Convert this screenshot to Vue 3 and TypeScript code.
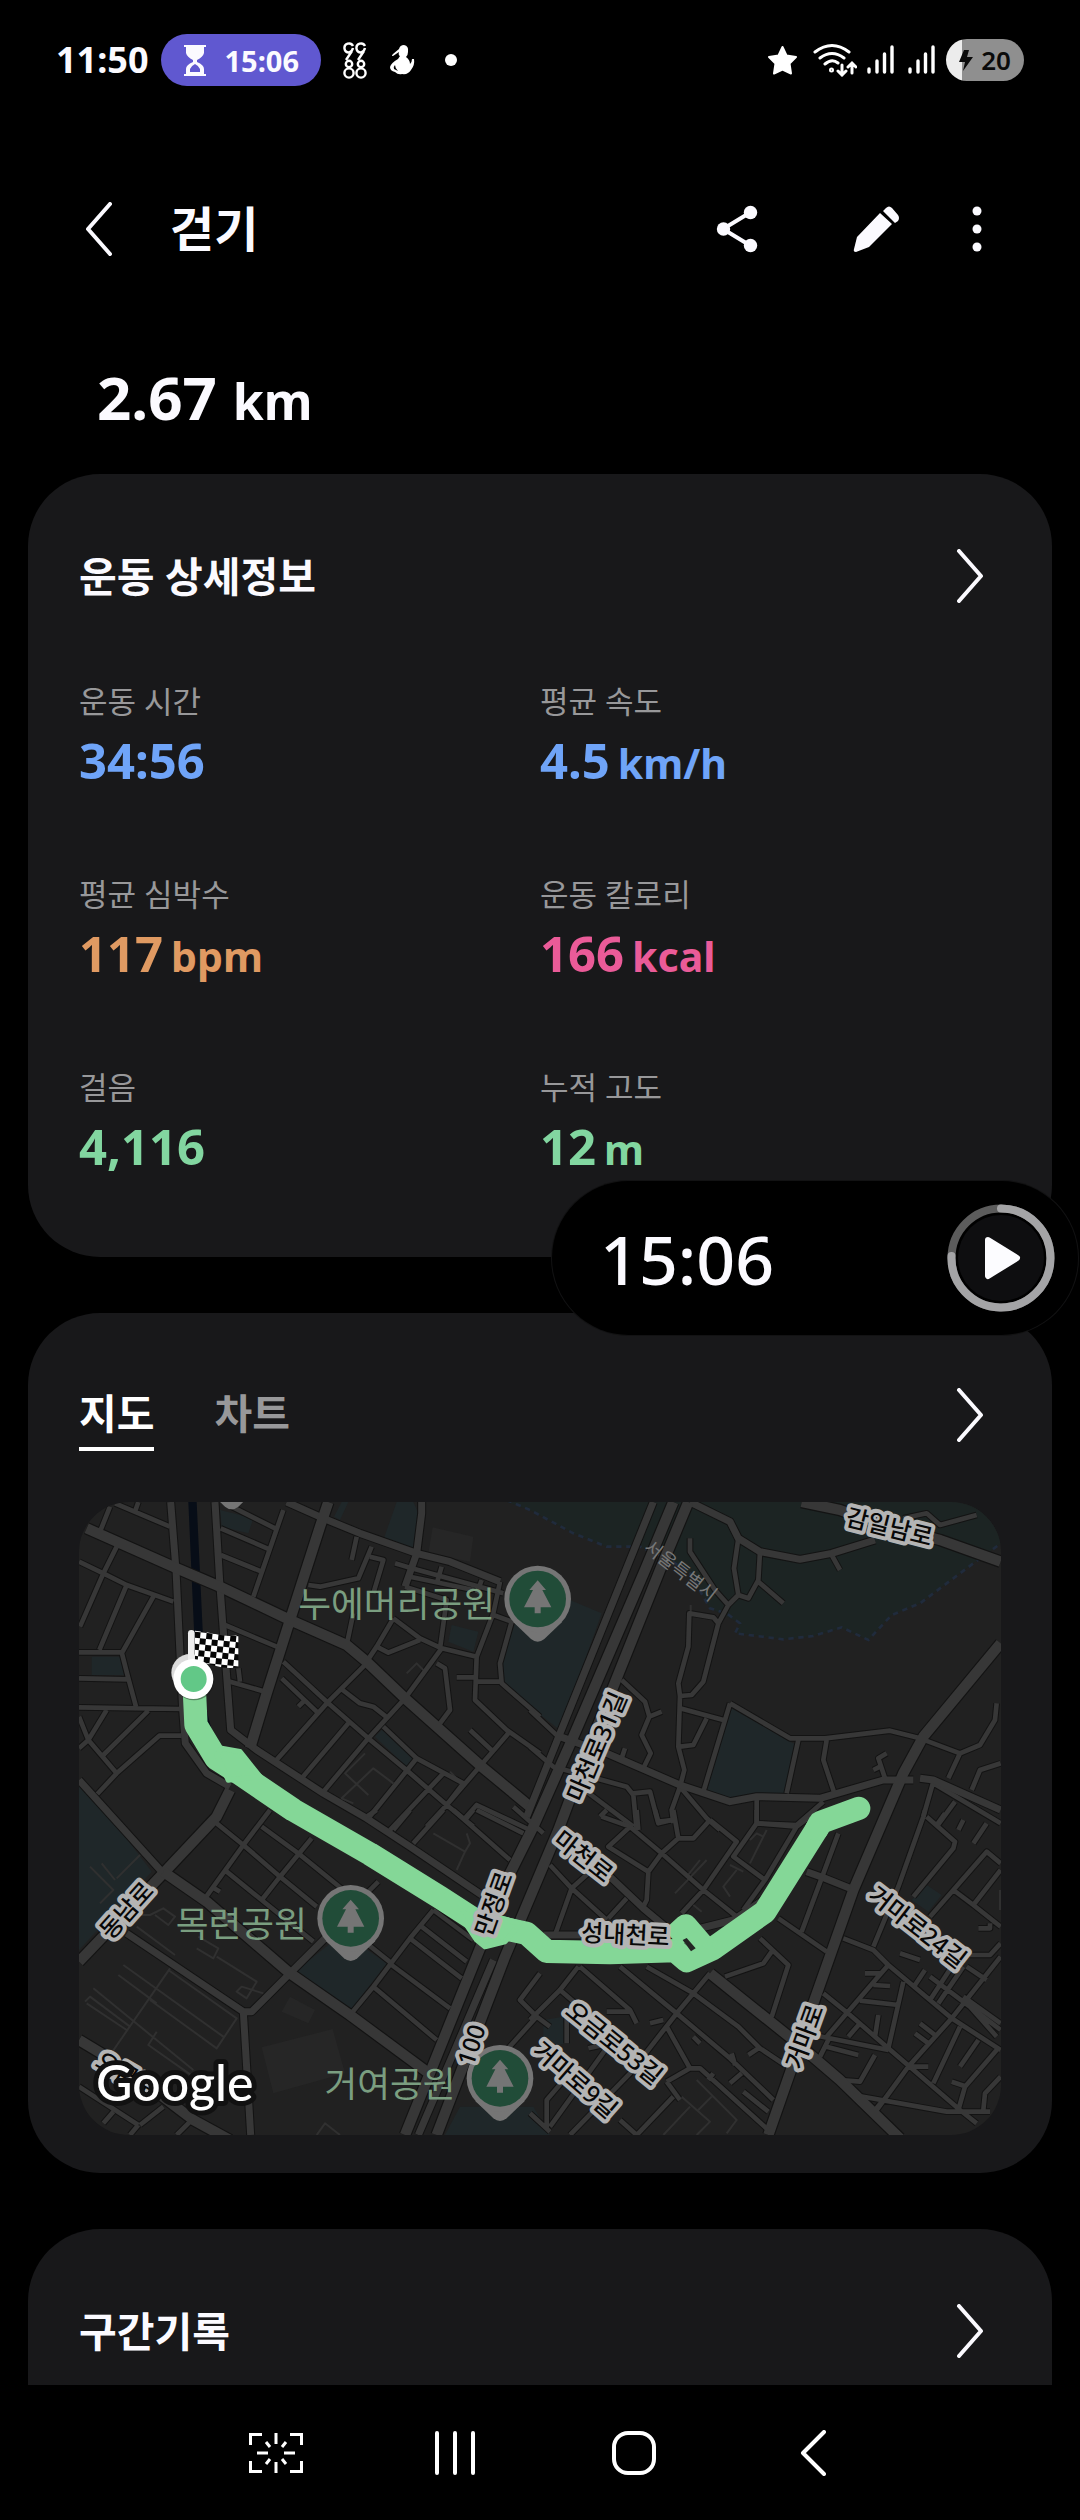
<script setup lang="ts">
import { ref } from 'vue'

interface Stat {
  label: string
  value: string
  unit?: string
  tone: 'blue' | 'orange' | 'pink' | 'green'
}

const stats: Stat[] = [
  { label: '운동 시간', value: '34:56', tone: 'blue' },
  { label: '평균 속도', value: '4.5', unit: 'km/h', tone: 'blue' },
  { label: '평균 심박수', value: '117', unit: 'bpm', tone: 'orange' },
  { label: '운동 칼로리', value: '166', unit: 'kcal', tone: 'pink' },
  { label: '걸음', value: '4,116', tone: 'green' },
  { label: '누적 고도', value: '12', unit: 'm', tone: 'green' },
]

const tabs = ['지도', '차트']
const activeTab = ref('지도')

/* The street map is made of four tiles; each road is given in its tile's own units. */
interface Tile {
  x: number
  y: number
  major: string
  medium: string
  minor: string
  thin: string
}

const tiles: Tile[] = [
  {
    x: 0,
    y: 0,
    major:
      'M805 36L780 110L690 390L620 610L570 775M80 115L350 235L480 290L690 390L860 465L920 515L1035 625L1265 830L1410 950M510 900L470 980L310 1150L57 1415',
    medium:
      'M332 36L348 240L368 660L376 760L440 850L510 890M465 36L480 290L512 720L590 780L790 910L920 985L1050 1070L1265 1215M680 36L790 85L900 130L1070 190L1170 215L1320 275M1085 36L1085 70L1070 190L1035 290M57 870L310 1150',
    minor:
      'M150 50L120 125M165 40L330 110M235 36L225 65M170 170L130 250L60 410M57 215L130 250L200 285L340 335M200 285L118 480M280 320L185 490M57 487L185 487L205 565L228 650M57 565L205 568M57 652L365 657M57 680L85 750L170 850M140 660L85 750L57 775M265 662L130 795M365 737L298 737L170 850L112 912M670 60L580 320M515 50L645 115M482 115L628 178M482 195L605 245M495 405L650 470M535 535L540 575M500 572L615 605M670 515L805 640M665 565L770 665M735 630L715 650M925 515L805 635L645 815M848 600L900 640L940 650L978 680M865 700L725 865M1035 625L925 745L790 905M805 640L925 745L1045 845L1160 945L1240 1010M1000 385L1080 445L1145 475L1250 500M1000 385L950 470L920 515M950 470L985 488L1080 450M860 465L880 370M745 285L780 290L895 265L935 170M890 140L875 210M930 200L970 210L940 310M1005 220L1055 235L1330 310M1035 290L1160 330L1140 475M1320 275L1300 370L1250 500L1245 630L1340 720L1440 790M1050 260L1240 300M1300 375L1355 395L1320 520L1325 580L1440 680M1245 575L1325 575M1190 562L1245 562M1130 520L1155 535L1170 660L1140 700M1145 475L1035 625M970 710L1070 805L1210 880M1070 805L925 985M1150 850L990 1020M1210 880L1160 945M1230 720L1300 785M1345 730L1160 945L1100 1010M1210 990L1250 945L1410 1020M1145 230L1130 280M1265 270L1250 310',
    thin: 'M915 790L855 850L925 915M1000 880L940 835L845 925L880 940M1040 550L1070 520L1090 540M1065 235L1105 245M1170 845L1205 880',
  },
  {
    x: 1410,
    y: 0,
    major:
      'M815 36L930 60L1040 100L1230 150L1412 215M1412 460L1180 740L1120 850L1060 990L970 1200L850 1540L790 1720L715 1935M430 36L345 240L130 740L10 1010L-60 1150L-160 1400L-375 1935M475 36L390 240L190 740L85 1020L-75 1400L-280 1935',
    medium:
      'M370 36L90 730L-10 980M90 740L230 790L450 885L600 935L680 920L870 925L1060 870L1150 870M1170 865L1210 870L1412 960M480 36L600 95L625 145L690 185L810 208L905 190L1035 150',
    minor:
      'M1120 85L1190 70L1230 105L1340 75M905 195L930 240M690 185L685 270L655 325L625 315L612 235L625 145M685 275L760 340M625 315L595 345L555 300L480 185L480 145M595 345L565 400L520 575L485 615L450 618L445 580L475 470L478 370L550 382L565 400M450 618L445 770L463 840L450 890L425 960L430 1000M450 655L580 690M530 685L490 765L450 770M600 640L780 745L885 745L1080 722L1170 745L1290 790L1350 765L1395 690L1400 640M600 640L520 905M805 750L770 910M890 750L880 810L915 915M1290 790L1255 865M1030 840L1050 830M1070 790L1045 805L1065 865M1412 820L1350 840L1325 900M1210 880L1412 1000M1210 875L1180 980M1275 935L1220 1010M275 570L345 635L358 680L335 735L362 790L340 835M358 680L395 665M285 775L275 805M0 660L90 745M0 770L70 830L290 890L310 915L320 1020M310 910L360 905L385 1000L425 990M150 890L310 1010M230 960L210 980M680 925L680 1000L800 1005L880 935M450 890L530 985L570 1020M-50 950L40 1030',
    thin: 'M482 345L482 370',
  },
  {
    x: 0,
    y: 960,
    major: 'M57 690L190 770L400 930L510 990M310 185L440 275L690 490L870 615L1100 785',
    medium: 'M200 370L550 605L575 605L690 490L810 370M550 605L572 975M1300 450L1075 975',
    minor:
      'M57 830L235 945M400 925L350 975M240 945L310 890M160 905L130 940M235 945L210 975M470 40L550 105L660 200L770 290M630 0L550 105L435 265M755 85L660 200L605 270M605 50L715 130L850 240M500 185L605 270L760 395M955 215L920 250M920 400L995 460M1120 300L1050 385L940 530L870 615M1120 300L1240 390M1085 350L1220 455M1050 385L1205 505M995 465L1170 595M940 530L1130 690M455 230L480 245M1150 0L1060 100M1000 60L1050 0M1180 0L1350 150M1250 0L1390 70M1215 30L1240 0M920 20L950 0M1440 490L1380 570L1430 620L1340 720M1430 620L1470 650',
    thin: 'M240 135L170 205M125 160L165 210M90 170L160 240L120 280M230 315L270 315L310 295L345 320L325 345L285 315M230 350L345 435M190 465L490 680M325 480L530 625L470 715L270 570M330 475L140 750M75 575L90 560L210 650M80 580L200 660M175 495L290 580M100 535L400 780M290 665L265 705L400 800M415 380L475 415L460 445L410 415M470 440L590 515L560 565L530 545L545 530L610 550M1120 70L1215 125L1190 180M1220 70L1230 100L1215 125M770 975L795 940L840 975',
  },
  {
    x: 1410,
    y: 960,
    major: 'M540 490L790 690L930 810L1110 985',
    medium: 'M40 375L430 375L610 330L700 270M240 200L340 295L430 370M830 185L885 205L960 235',
    minor:
      'M60 165L125 235L230 330M215 20L300 50L395 130L520 240L620 320M300 50L235 110L355 185L350 270L340 290M395 130L355 185M125 235L75 375M125 235L175 190M290 265L235 325M375 0L385 35L430 30M320 0L325 60M430 0L445 85L490 85L540 30M445 85L395 130M540 30L620 95L520 240L455 310M680 0L680 40L800 50L840 20M680 40L610 140L705 210M800 50L705 210L640 300M925 70L815 365M745 325L890 425M690 385L775 465L725 620M585 500L700 460L725 425M1185 0L1180 20L1105 230L1030 410M1190 20L1275 95L1270 115L1150 260M940 385L1030 420L1075 465L1265 625L1412 720M1245 10L1220 45M1300 30L1285 60M1370 40L1330 100M1412 160L1370 125L1270 240L1200 320M1270 240L1330 285L1412 180M1330 285L1412 350M1075 465L1010 540L890 680M1005 490L1050 490M1030 525L1080 528M990 572L1105 585M1120 515L1075 715M1110 430L1170 450M1185 480L1155 525M1320 435L1380 435L1412 400M1345 355L1380 355L1380 340M1300 470L1225 580M1265 470L1200 570M1412 440L1265 625L1135 770L1040 900M1300 560L1412 640M1320 590L1400 680M1370 510L1310 470M880 550L960 615L1075 715L1290 900L1340 940M850 675L1075 720M900 680L870 740M890 710L985 735M990 640L955 680M1045 615L1035 680M930 810L990 815L1035 735M970 855L1250 905L1380 905M1060 870L1035 900M1135 770L1195 770M1290 650L1210 820M1345 690L1290 770M1400 720L1305 830L1285 900M1265 815L1310 830M1412 800L1365 850L1360 900M1170 640L1215 675M1155 670L1195 700M145 470L90 540L0 630M90 540L160 600M150 470L300 600L320 640M230 605L300 605M270 470L440 610L600 745L730 870M350 470L490 550L625 650L690 715L765 765M540 490L440 610L300 790L120 975M410 650L480 775L410 815M480 775L510 775L715 960M360 640L400 630M490 680L510 700M655 735L685 715M605 730L615 765M635 790L600 820M550 790L535 810M640 845L715 905M430 860L320 975M410 815L450 870M0 910L60 965M50 960L50 870L110 800M270 930L320 975M110 600L110 700M175 715L220 705M60 950L240 700M1200 500L1412 660',
    thin: 'M500 810L620 930L590 970M545 860L505 900M400 975L480 890M455 860L540 935L500 975M710 60L660 160M660 90L680 70L700 80M640 185L600 165M620 180L580 230L600 260M530 150L435 250M510 150L470 200M490 285L515 305M1410 240L1410 300',
  },
]

const parks: string[] = [
  'M845 36L865 36L840 90L822 80Z',
  'M1010 36L1060 36L1075 70L1060 180L970 150Z',
  'M480 60L580 85L565 130L485 110Z',
  'M95 500L180 500L192 555L95 555Z',
  'M57 870L165 1000L275 1145L57 1380Z',
  'M1175 405L1255 425L1240 485L1165 455Z',
  'M970 715L1070 800L1040 830L945 740Z',
  'M1410 280L1625 370L1500 720L1330 590L1325 520L1365 400Z',
  'M2015 655L2190 755L2210 765L2175 910L2010 925L1940 900Z',
  'M850 1330L980 1420L870 1565L710 1440Z',
  'M1200 1850L1420 1850L1470 1935L1155 1935Z',
  'M1450 1590L1510 1580L1515 1660L1450 1680Z',
  'M2600 1185L2645 1215L2605 1265L2555 1230Z',
]

const blocks: string[] = [
  'M1118 112L1240 140L1230 215L1105 190Z',
  'M605 1672L818 1617L855 1750L640 1810Z',
  'M690 1520L765 1560L745 1600L665 1565Z',
]

const pins = [
  { x: 515, y: -70 },
  { x: 1433, y: 327 },
  { x: 872, y: 1285 },
  { x: 1320, y: 1765 },
]

const parkLabels = [
  { text: '누에머리공원', x: 1010, y: 380 },
  { text: '목련공원', x: 544, y: 1340 },
  { text: '거여공원', x: 990, y: 1820 },
]

const roadLabels = [
  { text: '감일남로', x: 2488, y: 112, r: 14 },
  { text: '마천로31길', x: 1611, y: 770, r: -67 },
  { text: '마천로', x: 1570, y: 1100, r: 38 },
  { text: '거마로24길', x: 2572, y: 1312, r: 38 },
  { text: '성내천로', x: 1696, y: 1335, r: 3 },
  { text: '만정로', x: 1302, y: 1242, r: -70 },
  { text: '동남로', x: 200, y: 1262, r: -48 },
  { text: '100', x: 1235, y: 1665, r: -72 },
  { text: '거마로', x: 2234, y: 1640, r: -70 },
  { text: '오금로53길', x: 1662, y: 1660, r: 39 },
  { text: '거마로9길', x: 1545, y: 1770, r: 41 },
  { text: '오금로', x: 200, y: 1755, r: 30 },
]
</script>

<template>
  <div class="screen">
    <header class="status">
      <time class="clock">11:50</time>
      <div class="timer-chip">
        <svg width="22" height="31" viewBox="0 0 22 31" aria-hidden="true">
          <path fill="#fbfaff" fill-rule="evenodd" d="M0 0H22V2H20V8Q19 12 13 15V17Q20 20 20 24V29H22V31H0V29H2V24Q2 20 9 17V15Q3 12 2 8V2H0ZM6 27H16V24Q15 21 11 19Q7 21 6 24Z" />
        </svg>
        <span>15:06</span>
      </div>
      <svg class="s-9988" width="24" height="37" viewBox="0 0 24 37" fill="none" stroke="#fff" stroke-width="2.4" aria-hidden="true">
        <path d="M10 4A4.500 4.500 0 1 0 6 10.500Q9 10 10 6M3 18L9 9M22 4A4.500 4.500 0 1 0 18 10.500Q21 10 22 6M15 18L21 9" />
        <circle cx="6" cy="22" r="3.200" /><circle cx="18" cy="22" r="3.200" />
        <circle cx="6" cy="31" r="4.600" /><circle cx="18" cy="31" r="4.600" />
      </svg>
      <svg class="s-arm" width="25" height="30" viewBox="0 0 25 30" aria-hidden="true">
        <path fill="#fff" fill-rule="evenodd" d="M9 4Q10 0 14 0Q19 1 18 7Q18 10 16 12Q20 15 20 19Q22 17 22 14H24Q25 20 21 25Q18 30 12 29Q8 30 5 27Q0 26 0 22Q1 18 8 14L10 11Q8 10 9 7L3 11Q1 11 3 9ZM5 20Q3 22 4 24L8 26Q5 23 5 20Z" />
      </svg>
      <i class="s-dot"></i>
      <div class="status-right">
        <svg width="31" height="31" viewBox="0 0 31 31" aria-hidden="true">
          <path d="M15.500 2L19.500 10.500L29 12L22.500 18.500L24 28.500L15.500 24.500L7 28.500L8.500 18.500L2 12L11.500 10.500Z" fill="#fff" stroke="#fff" stroke-width="2" stroke-linejoin="round" />
        </svg>
        <svg class="s-wifi" width="44" height="34" viewBox="0 0 44 34" fill="none" stroke="#fff" stroke-width="3" stroke-linecap="round" aria-hidden="true">
          <path d="M2 9Q19-4 36 9M7 15Q19 6 31 15M12 21Q19 15 25 20M29 22V32M25 28L29 32L33 28M39 30V20M35 24L39 20L43 24" />
          <circle cx="18.500" cy="27" r="1" />
        </svg>
        <svg class="s-cell" width="27" height="30" viewBox="0 0 27 30" stroke="#fff" stroke-width="3.400" stroke-linecap="round" aria-hidden="true">
          <path d="M2 24V27M10 16V27M17.500 9V27M25 2V27" />
        </svg>
        <svg class="s-cell2" width="27" height="30" viewBox="0 0 27 30" stroke="#fff" stroke-width="3.400" stroke-linecap="round" aria-hidden="true">
          <path d="M2 24V27M10 16V27M17.500 9V27M25 2V27" />
        </svg>
        <div class="battery">
          <svg width="14" height="21" viewBox="0 0 14 21" aria-hidden="true"><path d="M5 0H10L8 7H14L4 21L6 12H0Z" fill="#0b0b0b" /></svg>
          <span>20</span>
        </div>
      </div>
    </header>

    <nav class="app-bar">
      <button class="icon-btn" aria-label="뒤로">
        <svg width="28" height="54" viewBox="0 0 28 54" class="line"><path d="M25 2L3 27L25 52" /></svg>
      </button>
      <h1>걷기</h1>
      <button class="icon-btn share" aria-label="공유">
        <svg width="42" height="48" viewBox="0 0 42 48" aria-hidden="true">
          <path d="M35 7L7 24L35 41" fill="none" stroke="#fbfaff" stroke-width="4" />
          <g fill="#fbfaff"><circle cx="34.500" cy="7.500" r="6.700" /><circle cx="7.500" cy="24" r="6.700" /><circle cx="34.500" cy="40.500" r="6.700" /></g>
        </svg>
      </button>
      <button class="icon-btn edit" aria-label="편집">
        <svg width="47" height="48" viewBox="0 0 47 48" fill="#fbfaff" aria-hidden="true">
          <path d="M4 32L27 8L39 19L16 42L3 47Q0 47 1 44ZM30 6L33 3Q36 0 39 3L45 10Q47 13 45 16L42 18Z" />
        </svg>
      </button>
      <button class="icon-btn more" aria-label="더보기">
        <svg width="10" height="46" viewBox="0 0 10 46" fill="#fbfaff" aria-hidden="true"><circle cx="5" cy="5" r="4.500" /><circle cx="5" cy="23" r="4.500" /><circle cx="5" cy="41" r="4.500" /></svg>
      </button>
    </nav>

    <p class="distance">2.67<span>km</span></p>

    <main>
      <section class="card details">
        <div class="card-head">
          <h2>운동 상세정보</h2>
          <button class="icon-btn" aria-label="운동 상세정보 열기">
            <svg width="28" height="54" viewBox="0 0 28 54" class="line"><path d="M3 2L25 27L3 52" /></svg>
          </button>
        </div>
        <dl class="stats">
          <div v-for="s in stats" :key="s.label">
            <dt>{{ s.label }}</dt>
            <dd :class="s.tone">{{ s.value }}<span v-if="s.unit">{{ s.unit }}</span></dd>
          </div>
        </dl>
        <aside class="timer">
          <time>15:06</time>
          <button class="play" aria-label="타이머 시작">
            <svg width="108" height="108" viewBox="0 0 108 108" aria-hidden="true">
              <circle cx="54" cy="54" r="43" fill="#0e0e10" />
              <circle cx="54" cy="54" r="49.500" fill="none" stroke="#5c5c5c" stroke-width="8" />
              <path d="M54 4.500A49.500 49.500 0 1 1 4.500 52" fill="none" stroke="#a4a4a6" stroke-width="8" stroke-linecap="round" />
              <path d="M41 36L70 54L41 72Z" fill="#fcfcff" stroke="#fcfcff" stroke-width="6" stroke-linejoin="round" />
            </svg>
          </button>
        </aside>
      </section>

      <section class="card map-card">
        <div class="card-head">
          <div class="tabs" role="tablist">
            <button v-for="t in tabs" :key="t" role="tab" :aria-selected="t === activeTab" :class="{ on: t === activeTab }" @click="activeTab = t">{{ t }}</button>
          </div>
          <button class="icon-btn" aria-label="지도 열기">
            <svg width="28" height="54" viewBox="0 0 28 54" class="line"><path d="M3 2L25 27L3 52" /></svg>
          </button>
        </div>

        <svg class="map" viewBox="57 36 2766 1899" role="img" aria-label="운동 경로 지도">
          <defs>
            <pattern id="checks" width="36" height="36" patternUnits="userSpaceOnUse" patternTransform="translate(404 425) rotate(6)">
              <rect width="36" height="36" fill="#fff" />
              <path d="M0 0H18V18H0ZM18 18H36V36H18Z" fill="#050505" />
            </pattern>
            <g id="pin">
              <path d="M-74 68L-20 120Q0 136 20 120L74 68Z" fill="#757575" />
              <circle r="100" fill="#757575" />
              <circle r="85" fill="#214c38" />
              <path d="M0-56L25-27H14L41 25H9V43H-9V25H-41L-14-27H-25Z" fill="#757575" />
            </g>
          </defs>
          <rect x="57" y="36" width="2766" height="1899" fill="#212121" />
          <path d="M1340 36H2823V160L2740 220L2580 340L2495 375L2425 450L2345 415L2250 440L2170 448L2030 430L2040 400L1950 355L1890 250L1810 200L1740 170H1640L1540 130L1410 60Z" fill="#1c2423" />
          <path v-for="p in parks" :key="p" :d="p" fill="#1f2729" />
          <path v-for="b in blocks" :key="b" :d="b" fill="#262626" />
          <path d="M385 36H410L428 420L435 640L455 720H425L410 600Z" fill="#070d17" />
          <path d="M1340 30L1410 60L1540 130L1640 170H1740L1830 210L1890 250L1950 355L2000 370L2040 400L2025 430L2170 448L2260 438L2345 412L2425 450L2495 375L2580 340L2740 220L2823 160" fill="none" stroke="#202b3c" stroke-width="8" stroke-dasharray="16 14" />

          <g fill="none" stroke-linejoin="round">
            <g v-for="t in tiles" :key="`edge-${t.x}-${t.y}`" :transform="`translate(${t.x} ${t.y})`" stroke="#131313">
              <path :d="t.minor" stroke-width="20" />
              <path :d="t.medium" stroke-width="27" />
              <path :d="t.major" stroke-width="38" />
            </g>
            <g v-for="t in tiles" :key="`road-${t.x}-${t.y}`" :transform="`translate(${t.x} ${t.y})`" stroke="#373737">
              <path :d="t.thin" stroke="#303030" stroke-width="6" />
              <path :d="t.minor" stroke-width="14" />
              <path :d="t.medium" stroke-width="21" />
              <path :d="t.major" stroke-width="31" />
            </g>
          </g>

          <g class="park-labels">
            <text v-for="l in parkLabels" :key="l.text" :x="l.x" :y="l.y">{{ l.text }}</text>
          </g>
          <text class="district" transform="translate(1850 258) rotate(38)">서울특별시</text>
          <use v-for="p in pins" :key="p.x" href="#pin" :x="p.x" :y="p.y" />

          <g fill="none" stroke="#84d797" stroke-width="70" stroke-linejoin="round">
            <path d="M403 600L408 705L468 805L535 848L700 960L930 1092L1140 1222L1260 1300L1400 1330L1460 1384L1650 1388L1845 1382L1880 1412L1960 1375L2115 1265L2278 1005" />
            <path d="M2270 1018L2280 998L2396 955" stroke-linecap="round" />
            <path d="M1836 1345L1877 1308L1935 1375" />
            <path d="M470 795L485 775L540 785L600 860L505 870ZM1160 1215L1225 1258L1380 1300L1335 1355L1275 1370L1250 1350Z" fill="#84d797" stroke-width="16" />
          </g>
          <path d="M1868 1350L1880 1344L1907 1375L1893 1384Z" fill="#242424" />

          <g class="road-labels">
            <text v-for="l in roadLabels" :key="l.text" :transform="`translate(${l.x} ${l.y}) rotate(${l.r})`" y="25">{{ l.text }}</text>
          </g>

          <circle cx="390" cy="548" r="56" fill="#dcdcdc" />
          <path d="M394 430V510" stroke="#eee" stroke-width="20" stroke-linecap="round" />
          <path d="M405 422Q440 425 470 433T535 436V532Q500 538 465 527T405 515Z" fill="url(#checks)" />
          <circle cx="402" cy="570" r="61" fill="#151515" opacity=".4" />
          <circle cx="400" cy="567" r="60" fill="#fff" />
          <circle cx="401" cy="567" r="39" fill="#62c887" />
          <text class="google" x="108" y="1834">Google</text>
        </svg>
      </section>

      <section class="card laps">
        <div class="card-head">
          <h2>구간기록</h2>
          <button class="icon-btn" aria-label="구간기록 열기">
            <svg width="28" height="54" viewBox="0 0 28 54" class="line"><path d="M3 2L25 27L3 52" /></svg>
          </button>
        </div>
      </section>
    </main>

    <nav class="system-nav">
      <button aria-label="화면 캡처">
        <svg width="54" height="40" viewBox="0 0 54 40" fill="none" stroke="#fff" stroke-width="3" aria-hidden="true">
          <path d="M1.500 12V1.500H13M41 1.500H52.500V12M52.500 28V38.500H41M13 38.500H1.500V28M27 0V11M27 29V40M8 20H19M35 20H46M17 9L21 14M37 9L33 14M17 31L21 26M37 31L33 26" />
        </svg>
      </button>
      <button aria-label="최근 앱">
        <svg width="42" height="44" viewBox="0 0 42 44" class="nav-line"><path d="M3 2V42M21 2V42M39 2V42" /></svg>
      </button>
      <button aria-label="홈">
        <svg width="44" height="44" viewBox="0 0 44 44" class="nav-line"><rect x="2" y="2" width="40" height="40" rx="14" /></svg>
      </button>
      <button aria-label="뒤로 가기">
        <svg width="26" height="46" viewBox="0 0 26 46" class="nav-line"><path d="M24 2L3 23L24 44" /></svg>
      </button>
    </nav>
  </div>
</template>

<style>
body {
  background: #000;
}
</style>

<style scoped>
.screen {
  min-height: 100vh;
  display: flex;
  flex-direction: column;
  overflow-x: hidden;
  background: #000;
  color: #fbfaff;
  font-family: 'Noto Sans', 'Noto Sans CJK KR', sans-serif;
}
button {
  padding: 0;
  border: 0;
  background: none;
  color: inherit;
  font: inherit;
}
h1,
h2,
p,
dl,
dd {
  margin: 0;
}
svg {
  display: block;
  flex: none;
}
.line,
.nav-line {
  fill: none;
  stroke: #fbfaff;
  stroke-width: 4;
  stroke-linecap: round;
  stroke-linejoin: round;
}
.nav-line {
  stroke: #fff;
}

.status {
  display: flex;
  align-items: center;
  height: 120px;
  padding: 0 56px;
}
.clock {
  font-size: 36px;
  font-weight: 700;
  line-height: 52px;
}
.timer-chip {
  display: flex;
  align-items: center;
  gap: 18px;
  height: 52px;
  margin-left: 13px;
  padding: 0 22px 0 23px;
  border-radius: 26px;
  background: #6058d0;
  font-size: 29px;
  font-weight: 700;
}
.s-9988 {
  margin-left: 22px;
}
.s-arm {
  margin-left: 23px;
}
.s-dot {
  width: 12px;
  height: 12px;
  margin-left: 30px;
  border-radius: 50%;
  background: #fff;
}
.status-right {
  display: flex;
  align-items: center;
  margin-left: auto;
}
.s-wifi {
  margin-left: 15px;
}
.s-cell {
  margin-left: 10px;
}
.s-cell2 {
  margin-left: 14px;
}
.battery {
  display: flex;
  align-items: center;
  justify-content: center;
  gap: 8px;
  width: 78px;
  height: 42px;
  margin-left: 11px;
  border-radius: 21px;
  background: linear-gradient(90deg, #ececec 20%, #8f8f8f 20%);
  color: #0b0b0b;
  font-size: 26px;
  font-weight: 600;
}

.app-bar {
  display: flex;
  align-items: center;
  height: 218px;
  padding: 0 72px 0 68px;
}
.icon-btn {
  display: grid;
  place-items: center;
  width: 62px;
  height: 72px;
}
.app-bar h1 {
  margin-left: 40px;
  font-size: 48px;
  font-weight: 700;
  line-height: 72px;
}
.share {
  margin-left: auto;
}
.edit {
  margin-left: 77px;
}
.more {
  margin-left: 39px;
}
.distance {
  height: 118px;
  padding: 0 97px 18px;
  font-size: 60px;
  font-weight: 700;
  line-height: 118px;
}
.distance span {
  margin-left: 16px;
  font-size: 50px;
}

main {
  display: flex;
  flex-direction: column;
  gap: 56px;
  padding: 0 28px;
}
.card {
  padding: 66px 51px 38px;
  border-radius: 72px;
  background: #18181a;
}
.card-head {
  display: flex;
  align-items: center;
  justify-content: space-between;
  height: 72px;
}
.card h2 {
  font-size: 41px;
  font-weight: 700;
  line-height: 72px;
}
.details {
  position: relative;
  padding-bottom: 74px;
}
.stats {
  display: grid;
  grid-template-columns: 1fr 1fr;
  row-gap: 75px;
  margin-top: 67px;
}
.stats dt {
  color: #98989a;
  font-size: 31px;
  line-height: 44px;
}
.stats dd {
  height: 74px;
  font-size: 49px;
  font-weight: 700;
  line-height: 74px;
}
.stats dd span {
  margin-left: 8px;
  font-size: 41px;
}
.blue {
  color: #6fa4f8;
}
.orange {
  color: #e09a62;
}
.pink {
  color: #ea5b98;
}
.green {
  color: #82d6a0;
}

.timer {
  position: absolute;
  right: -26px;
  bottom: -78px;
  z-index: 1;
  display: flex;
  align-items: center;
  justify-content: space-between;
  box-sizing: border-box;
  width: 526px;
  height: 154px;
  padding: 0 23px 0 48px;
  border-radius: 77px;
  background: #000;
  box-shadow: 0 0 0 1px #121213;
}
.timer time {
  font-size: 68px;
  font-weight: 500;
}

.tabs {
  display: flex;
  gap: 60px;
}
.tabs button {
  height: 72px;
  border-bottom: 4px solid transparent;
  color: #98989a;
  font-size: 41px;
  font-weight: 700;
  line-height: 68px;
}
.tabs .on {
  border-color: #fff;
  color: #fff;
}
.map {
  width: 100%;
  height: auto;
  margin-top: 51px;
  border-radius: 50px;
  overflow: hidden;
}
.map text {
  text-anchor: middle;
}
.park-labels {
  fill: #7a9e80;
  font-size: 107px;
}
.district {
  fill: #777;
  font-size: 56px;
}
.road-labels {
  fill: #080808;
  stroke: #b4b4b4;
  stroke-width: 24px;
  stroke-linejoin: round;
  paint-order: stroke;
  font-size: 72px;
  font-weight: 500;
}
.map .google {
  fill: #fff;
  stroke: #111;
  stroke-width: 30px;
  stroke-linejoin: round;
  paint-order: stroke;
  text-anchor: start;
  font-family: Lato, sans-serif;
  font-size: 150px;
  font-weight: 500;
}

.laps {
  padding-bottom: 18px;
  border-radius: 72px 72px 0 0;
}
.system-nav {
  display: flex;
  flex: 1;
  align-items: center;
  justify-content: center;
  gap: 79px;
  min-height: 135px;
  padding-left: 8px;
}
.system-nav button {
  display: grid;
  place-items: center;
  width: 100px;
  height: 72px;
}
</style>
